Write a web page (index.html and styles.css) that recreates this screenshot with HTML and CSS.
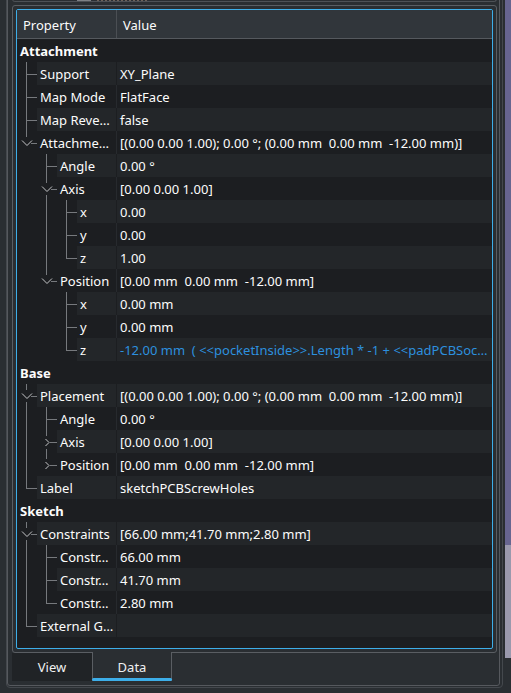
FILE: index.html
```html
<!DOCTYPE html>
<html>
<head>
<meta charset="utf-8">
<link rel="stylesheet" href="styles.css">
</head>
<body>
<div class="app">
  <div class="main">
    <div class="frame-b">
      <div class="frame-a">
        <div class="stub"><span class="bit1"></span><span class="bit2"></span></div>
        <div class="pane">
          <div class="view">
            <div class="hdr"><div class="h1">Property</div><div class="h2">Value</div></div>

            <div class="row"><div class="grp">Attachment</div></div>
            <div class="row alt"><div class="name"><span class="c t"></span><span class="lbl">Support</span></div><div class="val">XY_Plane</div></div>
            <div class="row"><div class="name"><span class="c t"></span><span class="lbl">Map Mode</span></div><div class="val">FlatFace</div></div>
            <div class="row alt"><div class="name"><span class="c t"></span><span class="lbl">Map Reve…</span></div><div class="val">false</div></div>
            <div class="row"><div class="name"><span class="c dn"><svg viewBox="0 0 20 23" width="20" height="23"><polyline points="5,9.5 10,14.5 15,9.5"/></svg></span><span class="lbl">Attachme…</span></div><div class="val">[(0.00 0.00 1.00); 0.00 °; (0.00 mm  0.00 mm  -12.00 mm)]</div></div>
            <div class="row alt"><div class="name"><span class="c"></span><span class="c t"></span><span class="lbl">Angle</span></div><div class="val">0.00 °</div></div>
            <div class="row"><div class="name"><span class="c"></span><span class="c dn more"><svg viewBox="0 0 20 23" width="20" height="23"><polyline points="5,9.5 10,14.5 15,9.5"/></svg></span><span class="lbl">Axis</span></div><div class="val">[0.00 0.00 1.00]</div></div>
            <div class="row alt"><div class="name"><span class="c"></span><span class="c v"></span><span class="c t"></span><span class="lbl">x</span></div><div class="val">0.00</div></div>
            <div class="row"><div class="name"><span class="c"></span><span class="c v"></span><span class="c t"></span><span class="lbl">y</span></div><div class="val">0.00</div></div>
            <div class="row alt"><div class="name"><span class="c"></span><span class="c v"></span><span class="c l"></span><span class="lbl">z</span></div><div class="val">1.00</div></div>
            <div class="row"><div class="name"><span class="c"></span><span class="c dn"><svg viewBox="0 0 20 23" width="20" height="23"><polyline points="5,9.5 10,14.5 15,9.5"/></svg></span><span class="lbl">Position</span></div><div class="val">[0.00 mm  0.00 mm  -12.00 mm]</div></div>
            <div class="row alt"><div class="name"><span class="c"></span><span class="c"></span><span class="c t"></span><span class="lbl">x</span></div><div class="val">0.00 mm</div></div>
            <div class="row"><div class="name"><span class="c"></span><span class="c"></span><span class="c t"></span><span class="lbl">y</span></div><div class="val">0.00 mm</div></div>
            <div class="row alt"><div class="name"><span class="c"></span><span class="c"></span><span class="c l"></span><span class="lbl">z</span></div><div class="val expr">-12.00 mm  ( &lt;&lt;pocketInside&gt;&gt;.Length * -1 + &lt;&lt;padPCBSoc…</div></div>

            <div class="row"><div class="grp">Base</div></div>
            <div class="row alt"><div class="name"><span class="c dn more"><svg viewBox="0 0 20 23" width="20" height="23"><polyline points="5,9.5 10,14.5 15,9.5"/></svg></span><span class="lbl">Placement</span></div><div class="val">[(0.00 0.00 1.00); 0.00 °; (0.00 mm  0.00 mm  -12.00 mm)]</div></div>
            <div class="row"><div class="name"><span class="c v"></span><span class="c t"></span><span class="lbl">Angle</span></div><div class="val">0.00 °</div></div>
            <div class="row alt"><div class="name"><span class="c v"></span><span class="c rt more"><svg viewBox="0 0 20 23" width="20" height="23"><polyline points="8.5,9 12,12.5 8.5,16"/></svg></span><span class="lbl">Axis</span></div><div class="val">[0.00 0.00 1.00]</div></div>
            <div class="row"><div class="name"><span class="c v"></span><span class="c rt"><svg viewBox="0 0 20 23" width="20" height="23"><polyline points="8.5,9 12,12.5 8.5,16"/></svg></span><span class="lbl">Position</span></div><div class="val">[0.00 mm  0.00 mm  -12.00 mm]</div></div>
            <div class="row alt"><div class="name"><span class="c l"></span><span class="lbl">Label</span></div><div class="val">sketchPCBScrewHoles</div></div>

            <div class="row"><div class="grp">Sketch</div></div>
            <div class="row alt"><div class="name"><span class="c dn more"><svg viewBox="0 0 20 23" width="20" height="23"><polyline points="5,9.5 10,14.5 15,9.5"/></svg></span><span class="lbl">Constraints</span></div><div class="val">[66.00 mm;41.70 mm;2.80 mm]</div></div>
            <div class="row"><div class="name"><span class="c v"></span><span class="c t"></span><span class="lbl">Constr…</span></div><div class="val">66.00 mm</div></div>
            <div class="row alt"><div class="name"><span class="c v"></span><span class="c t"></span><span class="lbl">Constr…</span></div><div class="val">41.70 mm</div></div>
            <div class="row"><div class="name"><span class="c v"></span><span class="c l"></span><span class="lbl">Constr…</span></div><div class="val">2.80 mm</div></div>
            <div class="row alt"><div class="name"><span class="c l"></span><span class="lbl">External G…</span></div><div class="val"></div></div>

            <div class="filler"></div>
          </div>
        </div>
        <div class="tabbar">
          <div class="tab">View</div>
          <div class="tab active">Data</div>
        </div>
      </div>
    </div>
  </div>
  <div class="strip"><div class="s1"></div><div class="s2"></div></div>
</div>
</body>
</html>
```
FILE: styles.css
```css
* { box-sizing: border-box; }

body {
  margin: 0;
  width: 511px;
  height: 693px;
  overflow: hidden;
  background: #2a2e32;
  font-family: "Noto Sans", "DejaVu Sans", sans-serif;
  font-size: 13px;
  color: #fcfcfc;
}

.app {
  display: flex;
  height: 693px;
}

.main {
  width: 505px;
  padding-left: 6px;
  flex: none;
}

.frame-b {
  width: 497px;
  margin-top: -40px;
  border: 1px solid #44484d;
  border-radius: 4px;
  padding: 0 2px 1px 0;
}

.frame-a {
  border: 1px solid #56595e;
  border-radius: 3px;
  padding: 0 2px 4px 4px;
}

.stub {
  height: 40px;
  border: 1px solid #4d5156;
  border-top: none;
  border-radius: 0 0 3px 3px;
  display: flex;
  align-items: flex-end;
  padding-left: 64px;
}

.bit1 {
  width: 14px;
  height: 2px;
  background: #7e8185;
}

.bit2 {
  width: 50px;
  height: 1px;
  margin-left: 6px;
  background: repeating-linear-gradient(90deg, #6d6259 0 2px, transparent 2px 4px);
}

.pane {
  margin-top: 3px;
  height: 648px;
  border: 1px solid #5a5e63;
  border-radius: 3px;
  padding: 3px;
}

.view {
  height: 640px;
  border: 1px solid #3daee9;
  border-radius: 2px;
  background: #1c1e21;
  display: flex;
  flex-direction: column;
}

.hdr {
  display: flex;
  height: 29px;
  flex: none;
  background: #31363b;
  border-bottom: 1px solid #55595e;
  line-height: 28px;
}

.h1 {
  width: 100px;
  padding: 1px 0 0 6px;
  border-right: 1px solid #4b4f54;
}

.h2 {
  flex: 1;
  padding: 1px 0 0 6px;
}

.row {
  display: flex;
  height: 23px;
  flex: none;
  line-height: 23px;
  background: #1c1e21;
}

.grp {
  font-weight: bold;
  padding: 1px 0 0 3px;
}

.name {
  width: 100px;
  flex: none;
  display: flex;
  border-right: 1px solid #272a2e;
}

.row.alt .name {
  border-right-color: #1c1e21;
}

.lbl {
  flex: 1;
  padding: 1px 0 0 3px;
  white-space: nowrap;
  overflow: hidden;
}

.val {
  flex: 1;
  padding: 1px 0 0 3px;
  white-space: pre;
  overflow: hidden;
}

.row.alt .lbl,
.row.alt .val {
  background: #232629;
}

.val.expr {
  color: #2d90df;
}

.c {
  position: relative;
  width: 20px;
  height: 23px;
  flex: none;
}

.c svg {
  position: absolute;
  left: 0;
  top: 0;
  fill: none;
  stroke: #c6c7c9;
  stroke-width: 1;
}

.c::before,
.c::after {
  position: absolute;
  background: #76797d;
}

.c.v::before,
.c.t::before {
  content: "";
  left: 9px;
  top: 0;
  width: 1px;
  height: 23px;
}

.c.l::before {
  content: "";
  left: 9px;
  top: 0;
  width: 1px;
  height: 13px;
}

.c.t::after,
.c.l::after {
  content: "";
  left: 9px;
  top: 12px;
  width: 11px;
  height: 1px;
}

.c.dn::before,
.c.rt::before {
  content: "";
  left: 9px;
  top: 0;
  width: 1px;
  height: 6px;
}

.c.dn.more::before {
  height: 23px;
  background: linear-gradient(#76797d 0 6px, transparent 6px 18px, #76797d 18px);
}

.c.rt.more::before {
  height: 23px;
  background: linear-gradient(#76797d 0 6px, transparent 6px 19px, #76797d 19px);
}

.c.dn::after {
  content: "";
  left: 14px;
  top: 12px;
  width: 6px;
  height: 1px;
}

.c.rt::after {
  content: "";
  left: 13px;
  top: 12px;
  width: 7px;
  height: 1px;
}

.filler {
  flex: 1;
}

.tabbar {
  display: flex;
  align-items: flex-start;
  margin-top: -1px;
  height: 29px;
}

.tab {
  width: 80px;
  text-align: center;
  color: #eff0f1;
}

.tab:first-child {
  margin-top: 1px;
  height: 28px;
  line-height: 27px;
  padding-top: 1px;
  background: #202326;
}

.tab.active {
  position: relative;
  height: 29px;
  line-height: 28px;
  padding-top: 1px;
  background: #2a2e32;
  border-left: 1px solid #5a5e63;
  border-right: 1px solid #5a5e63;
}

.tab.active::after {
  content: "";
  position: absolute;
  left: -1px;
  right: -1px;
  bottom: 0;
  height: 3px;
  border-radius: 2px;
  background: #3daee9;
}

.strip {
  width: 6px;
  flex: none;
  display: flex;
  flex-direction: column;
}

.s1 {
  height: 545px;
  background: #676590;
}

.s2 {
  height: 113px;
  background: #9a99ad;
}
```
